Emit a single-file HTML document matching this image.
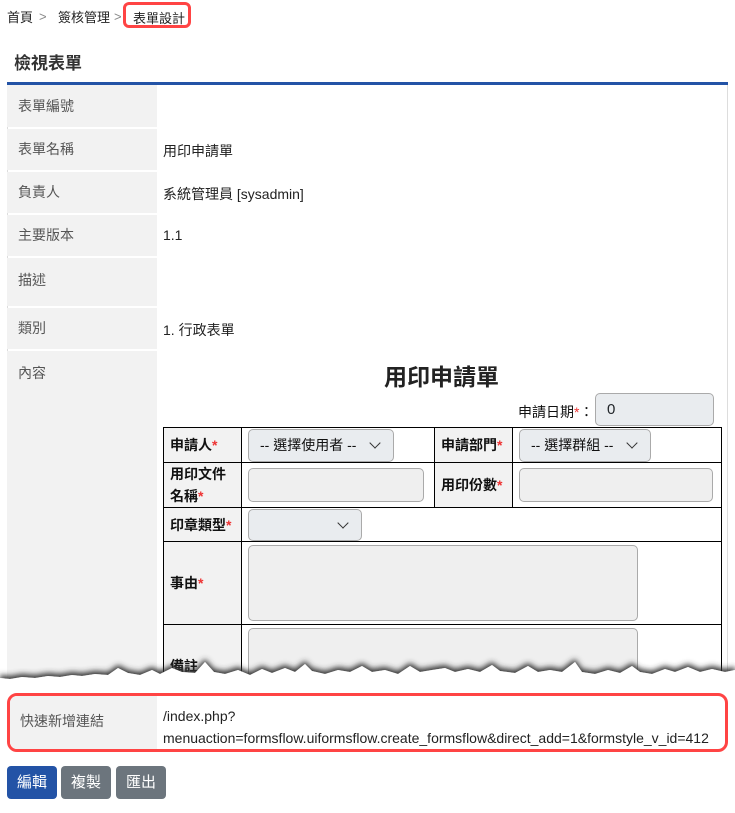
<!DOCTYPE html>
<html><head><meta charset="utf-8">
<style>
*{box-sizing:border-box;margin:0;padding:0}
body{width:735px;height:813px;background:#fff;font-family:"Liberation Sans","Noto Sans CJK TC",sans-serif;font-size:14px;color:#212529;position:relative;overflow:hidden}
.a{position:absolute}
.lab{position:absolute;left:7px;width:150px;background:#f2f2f2;color:#555;padding-left:11px;font-size:14px}
.val{position:absolute;left:163px;font-size:14px;color:#222}
.ft{position:absolute;border-collapse:collapse;left:163px;top:427px;width:559px;font-size:14px;color:#111}
.ft td{border:1.5px solid #000;padding:0 6px;vertical-align:middle}
.ft td.l{background:#f2f2f2;font-weight:bold;width:78px}
.r{color:#e33}
.sel{display:inline-block;height:33px;border:1px solid #aaa;border-radius:5px;background:#e9ecef;line-height:31px;padding-left:11px;font-size:14px;position:relative}
.inp{height:34px;border:1px solid #aaa;border-radius:5px;background:#efefef}
.chev{position:absolute;right:14px;top:9px;width:8px;height:8px;border-right:1.5px solid #333;border-bottom:1.5px solid #333;transform:rotate(45deg)}
.btn{position:absolute;top:766px;height:33px;width:50px;border-radius:4px;color:#fff;font-size:15px;text-align:center;line-height:33px}
.bc{position:absolute;top:7px;font-size:13px;color:#222}
.sep{position:absolute;top:9px;font-size:13px;color:#888;font-family:"Liberation Sans",sans-serif}
</style></head><body>
<div class="bc" style="left:7px">首頁</div>
<div class="sep" style="left:39px">&gt;</div>
<div class="bc" style="left:58px">簽核管理</div>
<div class="sep" style="left:114px">&gt;</div>
<div class="a" style="left:123px;top:2px;width:68px;height:26px;border:3px solid #f44;border-radius:6px;font-size:13px;color:#222;padding:3px 0 0 7px;background:#fff">表單設計</div>
<div class="a" style="left:14px;top:49px;font-size:17px;font-weight:bold;color:#333">檢視表單</div>
<div class="a" style="left:7px;top:82px;width:721px;height:3px;background:#2353a6"></div>
<div class="a" style="left:7px;top:85px;width:1px;height:600px;background:#ddd"></div>
<div class="a" style="left:727px;top:85px;width:1px;height:600px;background:#ddd"></div>
<div class="lab" style="top:85px;height:42px;line-height:42px">表單編號</div>
<div class="lab" style="top:129px;height:41px;line-height:41px">表單名稱</div>
<div class="lab" style="top:172px;height:41px;line-height:41px">負責人</div>
<div class="lab" style="top:215px;height:41px;line-height:41px">主要版本</div>
<div class="lab" style="top:258px;height:48px;padding-top:12px">描述</div>
<div class="lab" style="top:308px;height:41px;line-height:41px">類別</div>
<div class="lab" style="top:351px;height:340px;padding-top:12px">內容</div>
<div class="val" style="top:141px">用印申請單</div>
<div class="val" style="top:184px">系統管理員 [sysadmin]</div>
<div class="val" style="top:227px">1.1</div>
<div class="val" style="top:320px">1. 行政表單</div>
<div class="a" style="left:384px;top:358px;font-size:23px;font-weight:bold;color:#222">用印申請單</div>
<div class="a" style="left:518px;top:402px;font-size:14px;color:#111">申請日期<span class="r">*</span>：</div>
<div class="a" style="left:595px;top:393px;width:119px;height:33px;border:1px solid #aaa;border-radius:5px;background:#e9ecef;line-height:31px;padding-left:11px;font-size:15px">0</div>
<table class="ft">
<tr style="height:35px"><td class="l">申請人<span class="r">*</span></td><td style="width:193px"><div class="sel" style="width:146px">-- 選擇使用者 --<i class="chev"></i></div></td><td class="l" style="width:77px">申請部門<span class="r">*</span></td><td><div class="sel" style="width:132px">-- 選擇群組 --<i class="chev"></i></div></td></tr>
<tr style="height:45px"><td class="l" style="line-height:22px">用印文件<br>名稱<span class="r">*</span></td><td><div class="inp" style="width:176px"></div></td><td class="l">用印份數<span class="r">*</span></td><td><div class="inp" style="width:194px"></div></td></tr>
<tr style="height:34px"><td class="l">印章類型<span class="r">*</span></td><td colspan="3"><div class="sel" style="width:114px;height:32px">&nbsp;<i class="chev"></i></div></td></tr>
<tr style="height:83px"><td class="l">事由<span class="r">*</span></td><td colspan="3"><div class="inp" style="width:390px;height:76px"></div></td></tr>
<tr style="height:83px"><td class="l">備註</td><td colspan="3"><div class="inp" style="width:390px;height:76px"></div></td></tr>
</table>
<svg class="a" style="left:0;top:648px" width="735" height="47">
<defs><filter id="s" x="-5%" y="-50%" width="110%" height="200%"><feDropShadow dx="0" dy="-3" stdDeviation="3" flood-color="#333" flood-opacity="1"/></filter></defs>
<path filter="url(#s)" fill="#fff" d="M0 30 L10 31 L22 29 L35 30 L48 28 L60 29 L72 27 L82 28 L95 26 L108 27 L118 20 L128 25 L140 27 L152 22 L160 26 L172 20 L182 24 L195 25 L205 14 L214 24 L225 26 L238 22 L250 27 L262 21 L272 25 L285 20 L295 24 L305 16 L312 23 L325 26 L338 22 L350 24 L362 18 L372 24 L385 22 L398 26 L410 18 L420 24 L432 22 L445 20 L455 24 L468 21 L480 24 L492 17 L500 23 L515 25 L528 18 L538 24 L550 22 L562 24 L575 14 L582 24 L595 26 L608 22 L620 25 L632 18 L640 24 L652 26 L665 21 L675 24 L688 19 L700 24 L712 21 L725 24 L735 22 L735 47 L0 47 Z"/>
</svg>
<div class="a" style="left:7px;top:693px;width:721px;height:59px;border:3px solid #f44;border-radius:10px;background:#fff;overflow:hidden">
<div class="a" style="left:0;top:0;width:147px;height:53px;background:#f2f2f2;color:#555;padding:15px 0 0 10px">快速新增連結</div>
<div class="a" style="left:153px;top:9px;line-height:22px;color:#222">/index.php?<br>menuaction=formsflow.uiformsflow.create_formsflow&amp;direct_add=1&amp;formstyle_v_id=412</div>
</div>
<div class="btn" style="left:7px;background:#2353a6">編輯</div>
<div class="btn" style="left:61px;background:#6c757d">複製</div>
<div class="btn" style="left:116px;background:#6c757d">匯出</div>
</body></html>
